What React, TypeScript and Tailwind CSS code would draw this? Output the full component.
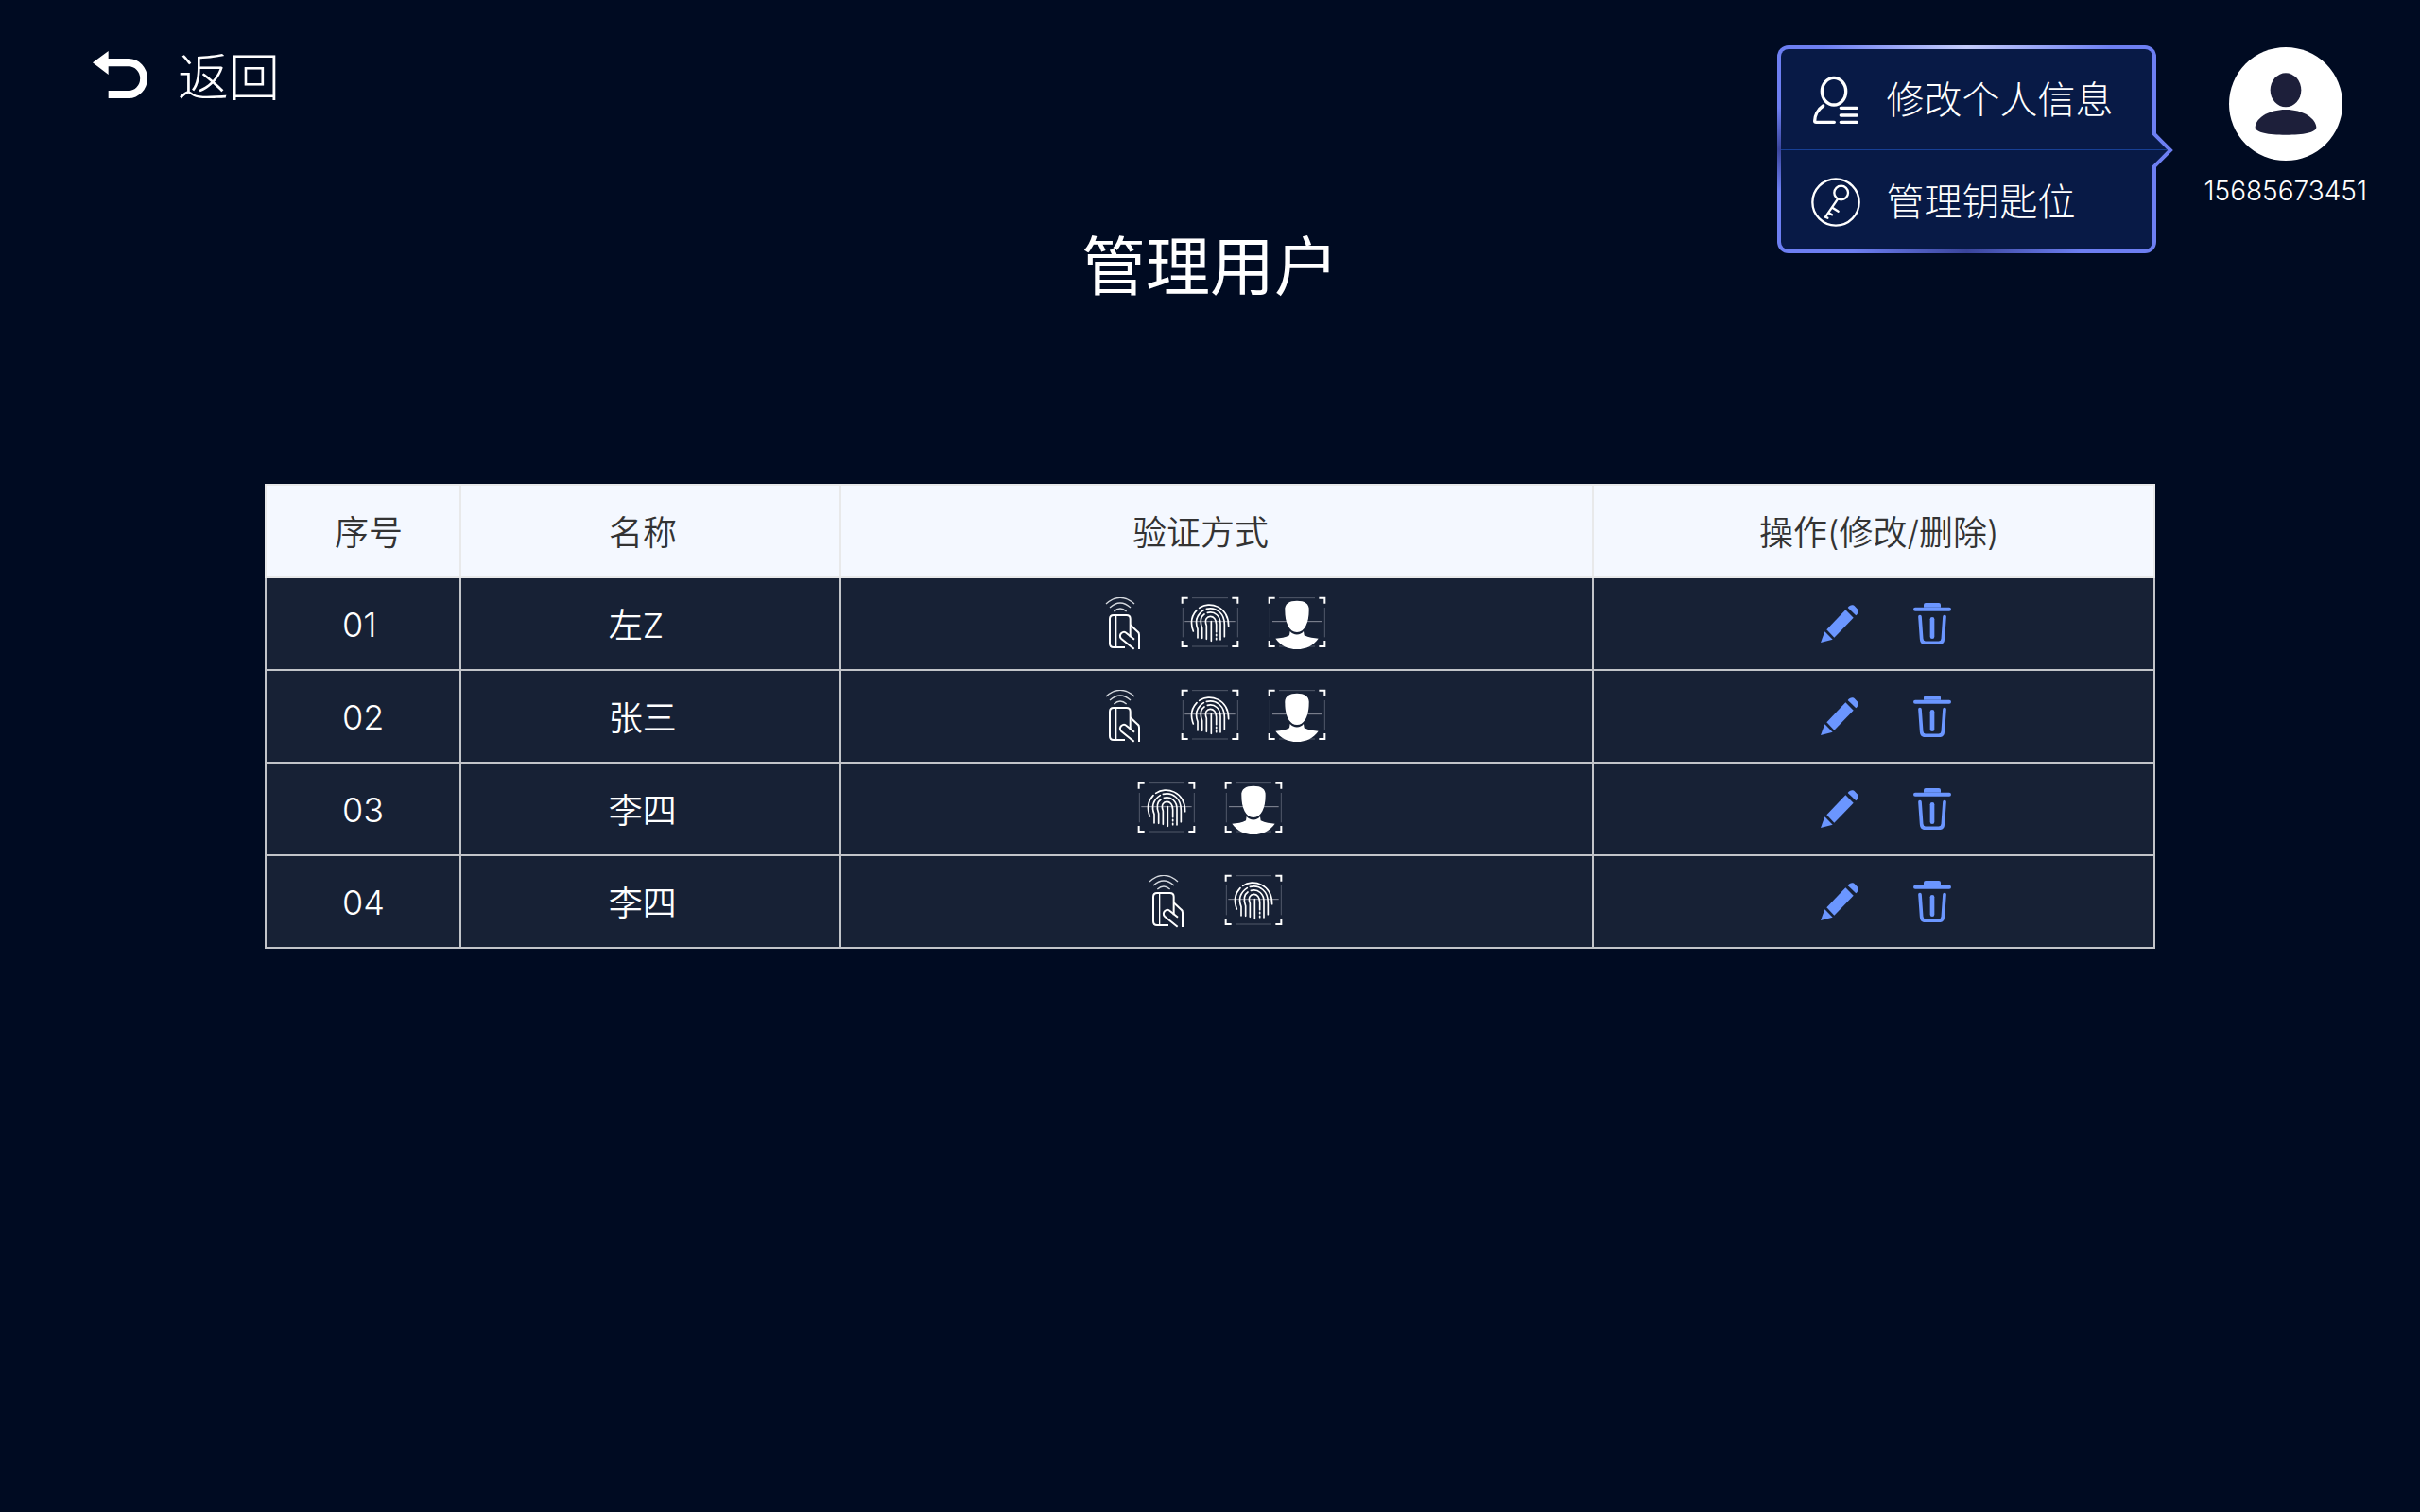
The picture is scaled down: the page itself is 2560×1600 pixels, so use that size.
const CJK = "font-['Inter','Noto_Sans_CJK_SC',sans-serif]";

type Method = 'card' | 'finger' | 'face';

const users: { id: string; name: string; methods: Method[] }[] = [
  { id: '01', name: '左Z', methods: ['card', 'finger', 'face'] },
  { id: '02', name: '张三', methods: ['card', 'finger', 'face'] },
  { id: '03', name: '李四', methods: ['finger', 'face'] },
  { id: '04', name: '李四', methods: ['card', 'finger'] },
];

function BackIcon() {
  return (
    <svg viewBox="0 0 174 150" className="h-[50px] w-[58px]" fill="white" aria-hidden="true">
      <path d="M0 37 50 0V24H114A60 63 0 0 1 114 150H50V126H114A36 38 0 0 0 114 49H50V75Z" />
    </svg>
  );
}

function ProfileIcon() {
  return (
    <svg viewBox="0 0 156 156" className="size-[52px] shrink-0" fill="none" stroke="white" strokeWidth="10" strokeLinecap="round" strokeLinejoin="round" aria-hidden="true">
      <ellipse cx="72" cy="50" rx="38" ry="43" />
      <path d="M38 96C20 108 11 128 11 144Q11 148 16 148H73" />
      <path d="M94 103H145M94 126H145M94 148H145" />
    </svg>
  );
}

function KeyIcon() {
  return (
    <svg viewBox="0 0 156 156" className="size-[52px] shrink-0" fill="none" stroke="white" strokeWidth="7" strokeLinecap="round" strokeLinejoin="round" aria-hidden="true">
      <circle cx="78" cy="78" r="74" />
      <circle cx="95" cy="48" r="22" />
      <path d="M84 68 45 125M67 95 86 107M56 112 66 118M45 125 52 128" />
    </svg>
  );
}

function AvatarIcon() {
  return (
    <svg viewBox="0 0 360 360" className="size-[120px]" aria-hidden="true">
      <circle cx="180" cy="180" r="180" fill="white" />
      <ellipse cx="180" cy="136" rx="49" ry="54" fill="#1d1f3a" />
      <path d="M83 254C84 226 124 198 180 198S275 226 277 254C276 270 236 278 180 278S84 270 83 254Z" fill="#1d1f3a" />
    </svg>
  );
}

function CardIcon() {
  return (
    <svg viewBox="0 0 180 168" role="img" aria-label="刷卡" className="h-14 w-[60px]" fill="none" stroke="white" strokeWidth="6">
      <path d="M36 21Q81 -19 126 21M48 33Q81 3 114 33M61 45Q81 27 101 45" strokeWidth="4" stroke="#d5d9df" />
      <path d="M96 159H60Q48 159 48 147V69Q48 57 60 57H101Q113 57 113 69V127" />
      <path d="M68 57V160" strokeWidth="4" />
      <path d="M113 88 137 110Q141 113 141 119V165M125 164 84 131C73 119 91 103 102 115L126 134" />
    </svg>
  );
}

function Frame() {
  return (
    <>
      <path d="M2 20V2H20M160 2H178V20M178 138V156H160M20 156H2V138" stroke="white" strokeWidth="6" />
      <path d="M33 2H147M33 156H147M4 33V127M178 33V127" stroke="#6f7785" strokeWidth="2" />
    </>
  );
}

function FingerIcon() {
  return (
    <svg viewBox="0 0 180 168" role="img" aria-label="指纹" className="h-14 w-[60px] overflow-visible" fill="none">
      <Frame />
      <path d="M10 77H170" stroke="#8b8f9c" strokeWidth="3" />
      <g stroke="white" strokeWidth="5" strokeLinecap="round">
        <path d="M37 108C27 82 32 58 48 41M56 34C88 11 149 28 149 92" />
        <path d="M51 129V101C39 70 52 53 70 41M79 37C111 30 137 52 136 89V125" />
        <path d="M65 130V98C58 78 60 62 72 54M82 49C105 43 124 60 123 86V135" />
        <path d="M79 133V90C71 70 82 61 91 61C101 61 110 70 110 86V110M110 118V122M110 130V134" />
        <path d="M94 139V77" />
      </g>
    </svg>
  );
}

function FaceIcon() {
  return (
    <svg viewBox="0 0 180 168" role="img" aria-label="人脸" className="h-14 w-[60px] overflow-visible" fill="none">
      <Frame />
      <path d="M12 77H170" stroke="#8b8f9c" strokeWidth="3" />
      <path d="M52 42C50 20 66 11 90 11S130 20 128 42C128 80 115 111 90 111S52 80 52 42Z" fill="white" />
      <path d="M68 108C78 122 102 122 111 108L113 121C126 128 145 130 158 131C143 153 119 165 90 165S37 153 22 131C38 130 54 128 66 121Z" fill="white" />
    </svg>
  );
}

function PencilIcon() {
  return (
    <svg viewBox="0 0 120 120" className="size-10" fill="#6b96ff" aria-hidden="true">
      <path d="M0 120 13 85 38 110Z" />
      <path d="M19 79 79 16 104 41 43 104Z" />
      <path d="M86 9C93 -1 103 -1 109 5L116 13C121 19 121 26 112 34Z" />
    </svg>
  );
}

function TrashIcon() {
  return (
    <svg viewBox="0 0 120 132" className="h-11 w-10" fill="none" stroke="#6b96ff" strokeLinecap="round" aria-hidden="true">
      <path d="M33 14V6Q33 0 39 0H81Q87 0 87 6V14Z" fill="#6b96ff" stroke="none" />
      <path d="M6 20H114" strokeWidth="12" />
      <path d="M21 44 26 114Q27 127 38 127H81Q93 127 94 114L99 44" strokeWidth="11" />
      <path d="M60 52V107" strokeWidth="14" />
    </svg>
  );
}

const methodIcons = { card: CardIcon, finger: FingerIcon, face: FaceIcon };

function AccountMenu() {
  return (
    <nav
      aria-label="账户"
      className="relative w-[401px] rounded-xl bg-[#6d7ff2] bg-[linear-gradient(90deg,#6d7ff2_12%,#c4ccfb_50%,#6d7ff2_88%),linear-gradient(90deg,#6d7ff2_20%,#3a459c_50%,#6d7ff2_80%),linear-gradient(180deg,#6d7ff2_30%,#3a459c_50%,#6d7ff2_70%)] bg-[length:100%_4px,100%_4px,4px_100%] bg-[position:top,bottom,left] bg-no-repeat p-1"
    >
      <div className="rounded-lg bg-[#081a46]">
        <button type="button" className="flex h-[107px] w-full items-center gap-7 border-b border-[#173f94] pt-0.5 pl-8 text-[40px] leading-none font-light">
          <ProfileIcon />
          修改个人信息
        </button>
        <button type="button" className="flex h-[105px] w-full items-center gap-7 pt-1 pl-8 text-[40px] leading-none font-light">
          <KeyIcon />
          管理钥匙位
        </button>
      </div>
      <svg viewBox="0 0 22 40" className="absolute top-[91px] -right-[18px] h-10 w-[22px]" aria-hidden="true">
        <path d="M0 3 17 20 0 37Z" fill="#081a46" />
        <path d="M0 19.5H15" stroke="#173f94" />
        <path d="M2 0V3L19 20 2 37V40" fill="none" stroke="#6d7ff2" strokeWidth="4" />
      </svg>
    </nav>
  );
}

export default function App() {
  return (
    <div className={`min-h-screen bg-[#000b22] text-white ${CJK}`}>
      <header className="flex items-start justify-between pt-12 pr-14 pl-[98px]">
        <button type="button" className="flex items-start gap-8 pt-1.5 text-[54px] leading-[58px] font-light">
          <BackIcon />
          返回
        </button>
        <div className="flex items-start gap-[51px]">
          <AccountMenu />
          <div className="flex flex-col items-center gap-2 pt-0.5">
            <AvatarIcon />
            <span className="text-[28px] leading-[48px] font-light">15685673451</span>
          </div>
        </div>
      </header>
      <main>
        <h1 className="-mt-[22px] text-center text-[68px] leading-[72px]">管理用户</h1>
        <table className="mx-auto mt-[194px] w-[78.125%] table-fixed border-collapse text-[36px]">
          <colgroup>
            <col className="w-[10.3%]" />
            <col className="w-[20.15%]" />
            <col className="w-[39.8%]" />
            <col className="w-[29.75%]" />
          </colgroup>
          <thead>
            <tr className="h-[98px] bg-[#f4f8ff] leading-[52px] text-[#333333] *:border-2 *:border-[#e8e9ea] *:pt-1 *:font-[350]">
              <th scope="col" className="pl-3">序号</th>
              <th scope="col" className="pr-4">名称</th>
              <th scope="col" className="pr-[34px]">验证方式</th>
              <th scope="col" className="pl-3">操作(修改/删除)</th>
            </tr>
          </thead>
          <tbody>
            {users.map((user) => (
              <tr key={user.id} className="h-[98px] bg-[#172135] leading-[52px] font-[350] *:border-2 *:border-[#c2c4c9]">
                <td className="pt-0.5 pl-20">{user.id}</td>
                <td className="pt-1 pl-[156px]">{user.name}</td>
                <td className="pr-3.5">
                  <div className="flex items-center justify-center gap-8">
                    {user.methods.map((method) => {
                      const Icon = methodIcons[method];
                      return <Icon key={method} />;
                    })}
                  </div>
                </td>
                <td className="pl-[26px]">
                  <div className="flex items-center justify-center gap-[58px]">
                    <button type="button" aria-label={`修改 ${user.name}`}>
                      <PencilIcon />
                    </button>
                    <button type="button" aria-label={`删除 ${user.name}`}>
                      <TrashIcon />
                    </button>
                  </div>
                </td>
              </tr>
            ))}
          </tbody>
        </table>
      </main>
    </div>
  );
}
